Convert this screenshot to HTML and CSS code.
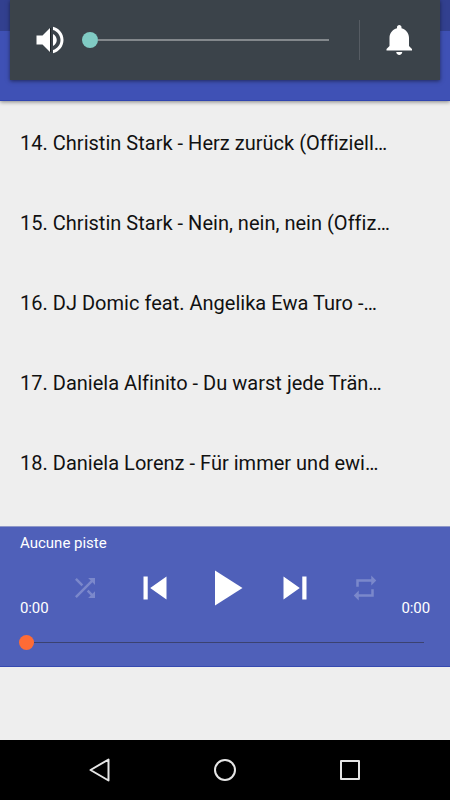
FILE: index.html
```html
<!DOCTYPE html>
<html lang="fr">
<head>
<meta charset="utf-8">
<title>Lecteur</title>
<link rel="stylesheet" href="styles.css">
</head>
<body>
<div class="screen">
  <header class="toolbar"><div class="status"></div></header>
  <section class="volume">
    <svg class="icon-volume" viewBox="0 0 24 24"><path d="M3 9v6h4l5 5V4L7 9H3zm13.5 3c0-1.77-1.02-3.29-2.5-4.03v8.05c1.48-.73 2.5-2.25 2.5-4.02zM14 3.23v2.06c2.89.86 5 3.54 5 6.71s-2.11 5.85-5 6.71v2.06c4.01-.91 7-4.49 7-8.77s-2.99-7.86-7-8.77z"/><path class="edge" d="M12.35 4v16"/></svg>
    <div class="volume-slider"><span class="volume-thumb"></span><span class="volume-line"></span></div>
    <span class="divider"></span>
    <svg class="icon-bell" viewBox="0 0 24 24"><path d="M11.5 22c1.1 0 2-.9 2-2h-4c0 1.1.9 2 2 2zm6.5-6v-5.5c0-3.07-2.13-5.64-5-6.32V3.5c0-.83-.67-1.5-1.5-1.5S10 2.67 10 3.5v.68c-2.87.68-5 3.25-5 6.32V16l-2 2v1h17v-1l-2-2z"/></svg>
  </section>
  <ul class="tracks">
    <li>14. Christin Stark - Herz zurück (Offiziell…</li>
    <li>15. Christin Stark - Nein, nein, nein (Offiz…</li>
    <li>16. DJ Domic feat. Angelika Ewa Turo -…</li>
    <li>17. Daniela Alfinito - Du warst jede Trän…</li>
    <li>18. Daniela Lorenz - Für immer und ewi…</li>
  </ul>
  <section class="player">
    <div class="title">Aucune piste</div>
    <div class="controls">
      <span class="time">0:00</span>
      <div class="buttons">
        <svg class="mode" viewBox="0 0 24 24"><path d="M10.59 9.17L5.41 4 4 5.41l5.17 5.17 1.42-1.41zM14.5 4l2.04 2.04L4 18.59 5.41 20 17.96 7.46 20 9.5V4h-5.5zm.33 9.41l-1.41 1.41 3.13 3.13L14.5 20H20v-5.5l-2.04 2.04-3.13-3.13z"/></svg>
        <svg class="skip" viewBox="0 0 24 24"><path d="M6 6h2.2v12H6zm3.5 6l8.5 6V6z"/></svg>
        <svg class="play" viewBox="0 0 24 24"><path d="M8 5v14l11-7z"/></svg>
        <svg class="skip" viewBox="0 0 24 24"><path d="M6 18l8.5-6L6 6v12zM15.8 6v12H18V6z"/></svg>
        <svg class="mode" viewBox="0 0 24 24"><path d="M7 7h10v3l4-4-4-4v3H5v6h2V7zm10 10H7v-3l-4 4 4 4v-3h12v-6h-2v4z"/></svg>
      </div>
      <span class="time">0:00</span>
    </div>
    <div class="seek"><span class="seek-thumb"></span><span class="seek-line"></span></div>
  </section>
  <nav class="navbar">
    <svg viewBox="0 0 30 30"><path d="M23.5 4.5v21L5.5 15z"/></svg>
    <svg viewBox="0 0 30 30"><circle cx="15" cy="15" r="10"/></svg>
    <svg viewBox="0 0 30 30"><rect x="6" y="6" width="18" height="18"/></svg>
  </nav>
</div>
</body>
</html>
```
FILE: styles.css
```css
* { box-sizing: border-box; }
body { margin: 0; font-family: Roboto, sans-serif; }
svg { display: block; flex: none; }
.screen {
  position: relative;
  display: flex;
  flex-direction: column;
  width: 450px;
  height: 800px;
  overflow: hidden;
  background: #eee;
}
.toolbar {
  height: 101px;
  background: #3f51b5;
  border-bottom: 1px solid #3045b0;
  box-shadow: 0 1px 4px rgba(0, 0, 0, .45);
}
.status { height: 31px; background: #32408f; }
.volume {
  position: absolute;
  top: 0;
  left: 10px;
  width: 430px;
  height: 80px;
  padding: 0 22px;
  display: flex;
  align-items: center;
  background: #3b434a;
  box-shadow: 0 1px 4px rgba(0, 0, 0, .5);
}
.icon-volume, .icon-bell { width: 36px; height: 36px; fill: #fff; }
.icon-volume .edge { stroke: #1c2226; stroke-width: .7; }
.volume-slider { display: flex; align-items: center; width: 247px; margin-left: 14px; }
.volume-thumb { width: 16px; height: 16px; border-radius: 50%; background: #80cbc4; }
.volume-line { flex: 1; height: 2px; background: #83888c; }
.divider { width: 1px; height: 40px; margin-left: 30px; background: #565c63; }
.icon-bell { margin-left: 22px; }
.tracks {
  flex: none;
  height: 425px;
  margin: 0;
  padding: 2px 20px 0;
  list-style: none;
  font-size: 20px;
  letter-spacing: .015px;
  color: #111;
  white-space: nowrap;
}
.tracks li { height: 80px; line-height: 80px; }
.player {
  flex: none;
  height: 141px;
  padding: 7px 20px 0;
  background: #4f60b9;
  border-top: 1px solid #8f98c8;
  border-bottom: 1px solid #3549b0;
  color: #fff;
  font-size: 15px;
}
.title { height: 18px; line-height: 18px; }
.controls { display: flex; justify-content: space-between; height: 73px; }
.time { width: 30px; padding-top: 47px; line-height: 18px; letter-spacing: -.1px; }
.time:last-child { text-align: right; }
.buttons {
  display: grid;
  grid-template-columns: repeat(5, 70px);
  justify-items: center;
  align-items: center;
  height: 71px;
}
.buttons svg { fill: #fff; }
.buttons .mode { width: 30px; height: 30px; fill: #7b88cb; }
.buttons .skip { width: 46px; height: 46px; }
.buttons .play { width: 60px; height: 60px; }
.seek { display: flex; align-items: center; width: 405px; height: 35px; margin-left: -1px; }
.seek-thumb { width: 15px; height: 15px; border-radius: 50%; background: #ff6b35; }
.seek-line { flex: 1; height: 1px; background: #3b4270; }
.navbar {
  display: flex;
  justify-content: center;
  align-items: center;
  gap: 95px;
  height: 60px;
  margin-top: auto;
  background: #000;
}
.navbar svg {
  width: 30px;
  height: 30px;
  fill: none;
  stroke: #e6e6e6;
  stroke-width: 2;
  stroke-linejoin: round;
}
```
